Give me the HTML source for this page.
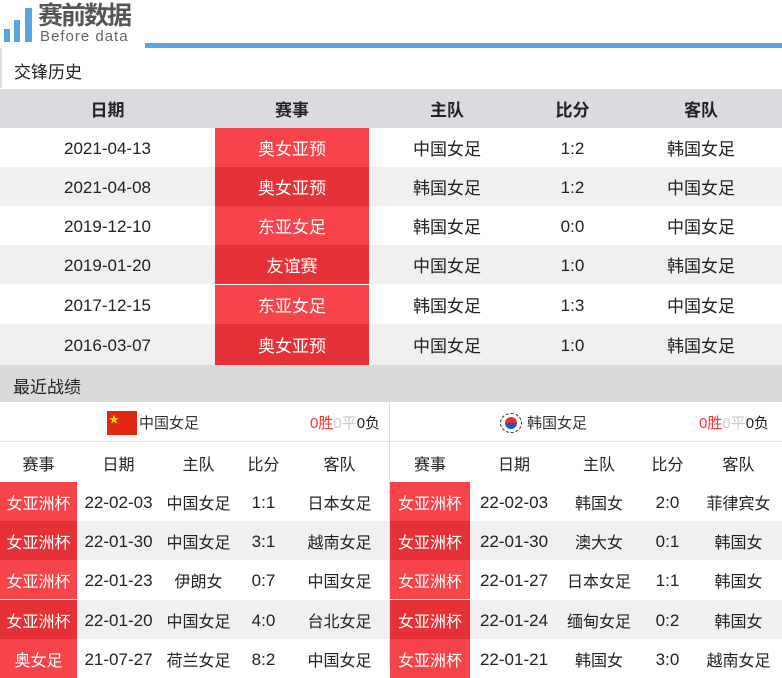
<!DOCTYPE html>
<html><head><meta charset="utf-8"><style>
*{margin:0;padding:0;box-sizing:border-box}
body{width:782px;height:666px;overflow:hidden;background:#fff;font-family:"Liberation Sans","Noto Sans CJK SC",sans-serif;color:#222;position:relative}
.abs{position:absolute}
.row{position:absolute;left:0;height:39px;display:flex}
.row div{display:flex;align-items:center;justify-content:center;height:100%;font-size:17px;white-space:nowrap}
.sm div{font-size:16px}
.row div.n{padding-top:3px}
.r1{background:#f7434a;color:#fff}
.r2{background:#e63237;color:#fff}
.g{background:#f0f0f0}
</style></head><body>
<div class="abs" style="left:4px;top:29px;width:6px;height:13px;background:#5aa5de"></div>
<div class="abs" style="left:14px;top:20px;width:6px;height:22px;background:#5aa5de"></div>
<div class="abs" style="left:25px;top:8px;width:7px;height:34px;background:#5aa5de"></div>
<div class="abs" style="left:38px;top:3px;font-size:25px;font-weight:bold;color:#555;letter-spacing:-2px;line-height:27px">赛前数据</div>
<div class="abs" style="left:40px;top:29px;font-size:15px;color:#666;letter-spacing:1px;line-height:16px">Before data</div>
<div class="abs" style="left:145px;top:43px;width:637px;height:5px;background:#5aa5de"></div>
<div class="abs" style="left:0;top:48px;width:2px;height:40px;background:#ddd"></div>
<div class="abs" style="left:14px;top:58px;font-size:17px">交锋历史</div>
<div class="row" style="top:89px;width:782px;background:#d9dbdf">
<div style="width:215px;font-weight:bold">日期</div><div style="width:154px;font-weight:bold">赛事</div><div style="width:156px;font-weight:bold">主队</div><div style="width:95px;font-weight:bold">比分</div><div style="width:162px;font-weight:bold">客队</div></div>
<div class="row" style="top:128px;width:782px"><div class="n" style="width:215px">2021-04-13</div><div class="r1" style="width:154px">奥女亚预</div><div style="width:156px">中国女足</div><div class="n" style="width:95px">1:2</div><div style="width:162px">韩国女足</div></div>
<div class="row g" style="top:167px;width:782px"><div class="n" style="width:215px">2021-04-08</div><div class="r2" style="width:154px">奥女亚预</div><div style="width:156px">韩国女足</div><div class="n" style="width:95px">1:2</div><div style="width:162px">中国女足</div></div>
<div class="row" style="top:206px;width:782px"><div class="n" style="width:215px">2019-12-10</div><div class="r1" style="width:154px">东亚女足</div><div style="width:156px">韩国女足</div><div class="n" style="width:95px">0:0</div><div style="width:162px">中国女足</div></div>
<div class="row g" style="top:245px;width:782px"><div class="n" style="width:215px">2019-01-20</div><div class="r2" style="width:154px">友谊赛</div><div style="width:156px">中国女足</div><div class="n" style="width:95px">1:0</div><div style="width:162px">韩国女足</div></div>
<div class="row" style="top:285px;width:782px"><div class="n" style="width:215px">2017-12-15</div><div class="r1" style="width:154px">东亚女足</div><div style="width:156px">韩国女足</div><div class="n" style="width:95px">1:3</div><div style="width:162px">中国女足</div></div>
<div class="row g" style="top:324px;width:782px;height:41px"><div class="n" style="width:215px">2016-03-07</div><div class="r2" style="width:154px">奥女亚预</div><div style="width:156px">中国女足</div><div class="n" style="width:95px">1:0</div><div style="width:162px">韩国女足</div></div>
<div class="abs" style="left:0;top:365px;width:782px;height:37px;background:#dadada"></div>
<div class="abs" style="left:13px;top:373px;font-size:17px">最近战绩</div>
<div class="abs" style="left:389px;top:402px;width:1px;height:264px;background:#ddd"></div>
<div class="abs" style="left:0;top:441px;width:782px;height:1px;background:#e4e4e4"></div>
<div class="abs" style="left:107px;top:411px;width:30px;height:24px;background:#de2910"></div>
<div class="abs" style="left:109px;top:411px;color:#ffde00;font-size:10px">★</div>
<div class="abs" style="left:139px;top:412px;font-size:15px;color:#333">中国女足</div>
<div class="abs" style="left:310px;top:412px;font-size:15px"><span style="color:#f33">0胜</span><span style="color:#ccc">0平</span>0负</div>
<div class="abs" style="left:500px;top:413px;width:22px;height:20px;border-radius:50%;background:#fff;border:1px dashed #333"></div>
<div class="abs" style="left:505px;top:417px;width:12px;height:12px;border-radius:50%;background:linear-gradient(#d33 50%,#1a5bb5 50%)"></div>
<div class="abs" style="left:527px;top:412px;font-size:15px;color:#333">韩国女足</div>
<div class="abs" style="left:699px;top:412px;font-size:15px"><span style="color:#f33">0胜</span><span style="color:#ccc">0平</span>0负</div>
<div class="row sm" style="top:443px;left:0;width:389px"><div style="width:77px">赛事</div><div style="width:83px">日期</div><div style="width:77px">主队</div><div style="width:53px">比分</div><div style="width:99px">客队</div></div>
<div class="row sm" style="top:482px;width:389px"><div class="r1" style="width:77px">女亚洲杯</div><div class="n" style="width:83px;font-size:17px">22-02-03</div><div style="width:77px">中国女足</div><div class="n" style="width:53px;font-size:17px">1:1</div><div style="width:99px">日本女足</div></div>
<div class="row sm g" style="top:521px;width:389px"><div class="r2" style="width:77px">女亚洲杯</div><div class="n" style="width:83px;font-size:17px">22-01-30</div><div style="width:77px">中国女足</div><div class="n" style="width:53px;font-size:17px">3:1</div><div style="width:99px">越南女足</div></div>
<div class="row sm" style="top:560px;width:389px"><div class="r1" style="width:77px">女亚洲杯</div><div class="n" style="width:83px;font-size:17px">22-01-23</div><div style="width:77px">伊朗女</div><div class="n" style="width:53px;font-size:17px">0:7</div><div style="width:99px">中国女足</div></div>
<div class="row sm g" style="top:600px;width:389px"><div class="r2" style="width:77px">女亚洲杯</div><div class="n" style="width:83px;font-size:17px">22-01-20</div><div style="width:77px">中国女足</div><div class="n" style="width:53px;font-size:17px">4:0</div><div style="width:99px">台北女足</div></div>
<div class="row sm" style="top:639px;width:389px"><div class="r1" style="width:77px">奥女足</div><div class="n" style="width:83px;font-size:17px">21-07-27</div><div style="width:77px">荷兰女足</div><div class="n" style="width:53px;font-size:17px">8:2</div><div style="width:99px">中国女足</div></div>
<div class="row sm" style="top:443px;left:390px;width:392px"><div style="width:80px">赛事</div><div style="width:88px">日期</div><div style="width:82px">主队</div><div style="width:55px">比分</div><div style="width:87px">客队</div></div>
<div class="row sm" style="top:482px;left:390px;width:392px"><div class="r1" style="width:80px">女亚洲杯</div><div class="n" style="width:88px;font-size:17px">22-02-03</div><div style="width:82px">韩国女</div><div class="n" style="width:55px;font-size:17px">2:0</div><div style="width:87px">菲律宾女</div></div>
<div class="row sm g" style="top:521px;left:390px;width:392px"><div class="r2" style="width:80px">女亚洲杯</div><div class="n" style="width:88px;font-size:17px">22-01-30</div><div style="width:82px">澳大女</div><div class="n" style="width:55px;font-size:17px">0:1</div><div style="width:87px">韩国女</div></div>
<div class="row sm" style="top:560px;left:390px;width:392px"><div class="r1" style="width:80px">女亚洲杯</div><div class="n" style="width:88px;font-size:17px">22-01-27</div><div style="width:82px">日本女足</div><div class="n" style="width:55px;font-size:17px">1:1</div><div style="width:87px">韩国女</div></div>
<div class="row sm g" style="top:600px;left:390px;width:392px"><div class="r2" style="width:80px">女亚洲杯</div><div class="n" style="width:88px;font-size:17px">22-01-24</div><div style="width:82px">缅甸女足</div><div class="n" style="width:55px;font-size:17px">0:2</div><div style="width:87px">韩国女</div></div>
<div class="row sm" style="top:639px;left:390px;width:392px"><div class="r1" style="width:80px">女亚洲杯</div><div class="n" style="width:88px;font-size:17px">22-01-21</div><div style="width:82px">韩国女</div><div class="n" style="width:55px;font-size:17px">3:0</div><div style="width:87px">越南女足</div></div>
</body></html>
